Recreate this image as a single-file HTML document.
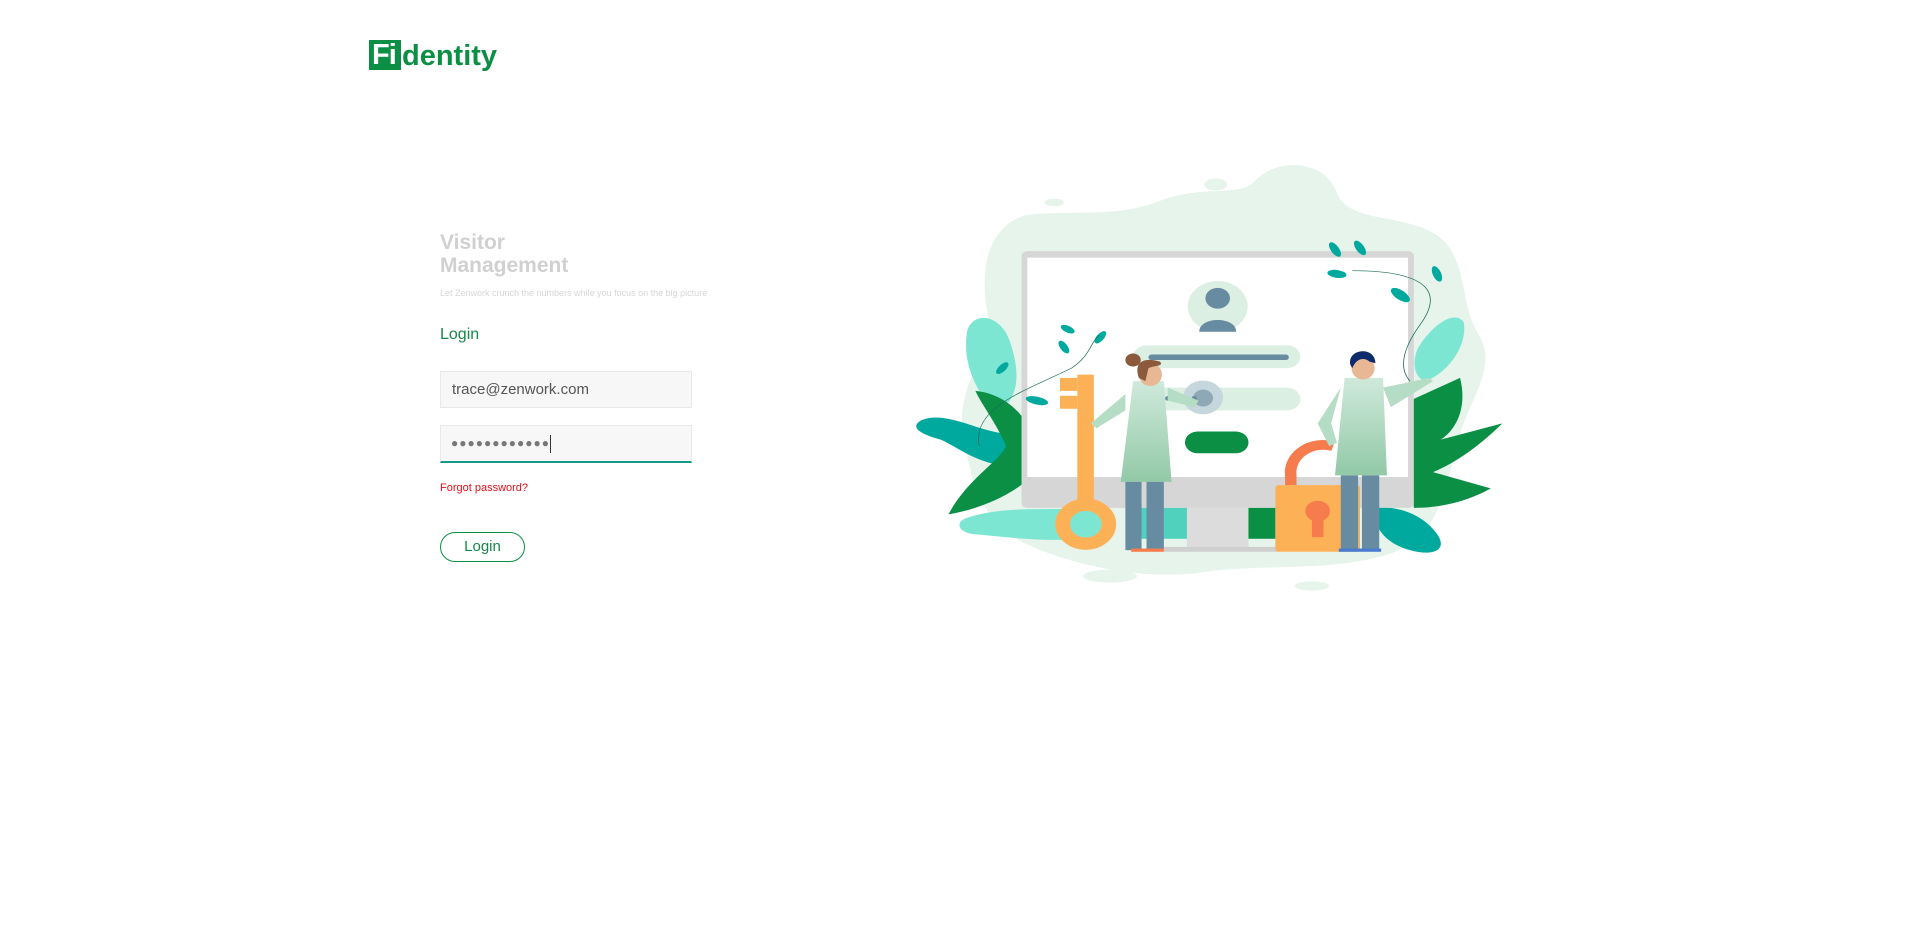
<!DOCTYPE html>
<html><head><meta charset="utf-8"><style>
html,body{margin:0;padding:0;background:#fff;width:1920px;height:925px;overflow:hidden;font-family:"Liberation Sans",sans-serif;}
.abs{position:absolute}
</style></head><body>
<div class="abs" style="left:369px;top:40px;width:32px;height:30px;background:#0b8f45;color:#fff;font-weight:bold;font-size:29px;line-height:31px;letter-spacing:-1px;padding-left:3px;box-sizing:border-box">Fi</div>
<div class="abs" style="left:402px;top:36px;color:#0b8f45;font-weight:bold;font-size:29px;line-height:40px;letter-spacing:0px">dentity</div>
<div class="abs" style="left:440px;top:231px;color:#d0d0d0;font-weight:bold;font-size:21px;line-height:23px">Visitor<br>Management</div>
<div class="abs" style="left:440px;top:287px;color:#d6d6d6;font-size:9px;line-height:12px">Let Zenwork crunch the numbers while you focus on the big picture</div>
<div class="abs" style="left:440px;top:325px;color:#17874a;font-size:16px;line-height:20px">Login</div>
<div class="abs" style="left:440px;top:371px;width:252px;height:37px;background:#f7f7f7;border:1px solid #e8e8e8;box-sizing:border-box;color:#555;font-size:15px;line-height:35px;padding-left:11px">trace@zenwork.com</div>
<div class="abs" style="left:440px;top:425px;width:252px;height:38px;background:#f7f7f7;border:1px solid #e8e8e8;border-bottom:2px solid #17998a;box-sizing:border-box;color:#777;font-size:12px;line-height:34px;padding-left:10px;letter-spacing:1px">●●●●●●●●●●●●<span style="display:inline-block;width:1px;height:18px;background:#333;vertical-align:middle"></span></div>
<div class="abs" style="left:440px;top:481px;color:#e0101a;font-size:11px;line-height:14px">Forgot password?</div>
<div class="abs" style="left:440px;top:532px;width:85px;height:30px;border:1px solid #0b8f45;border-radius:16px;box-sizing:border-box;color:#17874a;font-size:15px;line-height:28px;text-align:center">Login</div>

<svg class="abs" style="left:910px;top:150px" width="600" height="460" viewBox="0 0 1560 1196">
<defs><linearGradient id="g" x1="0" y1="0" x2="0" y2="1"><stop offset="0" stop-color="#cfe9db"/><stop offset="1" stop-color="#92c9a7"/></linearGradient></defs>
<g transform="matrix(1 0 0 0.845 0 9.5)">
<path d="M300 190 C420 170 520 200 640 150 C760 90 860 140 900 80 C960 10 1080 20 1110 120 C1140 220 1300 180 1380 260 C1450 330 1430 470 1480 560 C1530 660 1450 760 1420 900 C1390 1050 1370 1180 1250 1230 C1100 1290 900 1260 750 1290 C600 1310 430 1270 300 1200 C180 1130 160 1000 140 880 C110 720 220 600 200 480 C180 340 210 220 300 190Z" fill="#e6f4ec"/>
<ellipse cx="795" cy="95" rx="30" ry="18" fill="#e6f4ec"/><ellipse cx="375" cy="150" rx="25" ry="12" fill="#e6f4ec"/>
<ellipse cx="520" cy="1300" rx="70" ry="20" fill="#e6f4ec"/><ellipse cx="1045" cy="1330" rx="45" ry="14" fill="#e6f4ec"/>
<path d="M150 540 C170 480 240 500 260 580 C290 680 280 760 230 790 C180 760 130 640 150 540Z" fill="#7de6d3"/>
<path d="M30 820 C90 790 170 850 240 860 C300 870 330 960 260 960 C180 960 120 900 80 880 C20 860 0 840 30 820Z" fill="#00a99d"/>
<path d="M170 730 C260 740 330 830 340 960 C300 1030 200 1090 100 1110 C150 1000 230 950 250 900 C220 820 190 780 170 730Z" fill="#0b8f45"/>
<path d="M150 1120 C250 1080 380 1100 500 1090 L500 1180 C380 1200 250 1180 160 1170 C120 1160 120 1130 150 1120Z" fill="#7de6d3"/>
<path d="M1430 690 C1450 780 1420 850 1380 880 L1540 830 C1480 900 1420 950 1360 980 C1420 1000 1480 1020 1510 1030 C1450 1070 1380 1090 1310 1090 L1300 760Z" fill="#0b8f45"/>
<path d="M1320 600 C1360 520 1420 480 1440 520 C1450 600 1390 680 1340 700 C1310 690 1305 640 1320 600Z" fill="#7de6d3"/>
<path d="M1200 1090 C1280 1080 1340 1120 1370 1170 C1400 1220 1360 1240 1300 1220 C1240 1200 1210 1160 1200 1090Z" fill="#00a99d"/>
<rect x="290" y="300" width="1020" height="790" rx="15" fill="#d6d6d6"/>
<rect x="305" y="320" width="990" height="675" fill="#fff"/>
<rect x="720" y="1090" width="160" height="125" fill="#dcdcdc"/>
<rect x="600" y="1090" width="120" height="95" fill="#4fd1bd"/><rect x="880" y="1090" width="70" height="95" fill="#0b8f45"/>
<rect x="640" y="1210" width="320" height="15" fill="#cfcfcf"/>
<circle cx="800" cy="470" r="78" fill="#dcefe3"/>
<circle cx="800" cy="445" r="32" fill="#678ba0"/>
<path d="M752 548 C752 500 848 500 848 548Z" fill="#678ba0"/>
<rect x="580" y="590" width="435" height="70" rx="35" fill="#dcefe3"/>
<rect x="620" y="618" width="365" height="17" rx="8" fill="#678ba0"/>
<rect x="580" y="720" width="435" height="70" rx="35" fill="#dcefe3"/>
<circle cx="762" cy="750" r="52" fill="#c5d6dc"/><circle cx="762" cy="752" r="26" fill="#8fa8b5"/>
<g fill="#678ba0"><circle cx="670" cy="753" r="7"/><circle cx="693" cy="753" r="7"/><circle cx="716" cy="753" r="7"/><circle cx="739" cy="753" r="7"/></g>
<rect x="715" y="855" width="165" height="67" rx="33" fill="#0b8f45"/>
<g fill="#fdb157"><rect x="435" y="680" width="43" height="390"/><rect x="390" y="690" width="45" height="40"/><rect x="390" y="745" width="45" height="40"/></g>
<circle cx="457" cy="1140" r="60" fill="none" stroke="#fdb157" stroke-width="38"/>
<path d="M560 740 L470 830 L485 845 L560 790Z" fill="#b5dcc5"/>
<path d="M670 720 L750 760 L740 780 L670 760Z" fill="#b5dcc5"/>
<path d="M580 700 L660 700 L680 1010 L548 1010 Z" fill="url(#g)"/>
<rect x="560" y="1010" width="42" height="210" fill="#678ba0"/><rect x="615" y="1010" width="45" height="210" fill="#678ba0"/>
<rect x="575" y="1215" width="85" height="10" fill="#f77c4d"/>
<ellipse cx="625" cy="680" rx="30" ry="35" fill="#e8b894"/>
<path d="M595 690 C580 640 610 625 650 640 C660 655 640 650 620 660 L612 700Z" fill="#8b5a3c"/>
<circle cx="580" cy="635" r="20" fill="#8b5a3c"/>
<path d="M990 1020 L990 990 A85 85 0 0 1 1100 900" fill="none" stroke="#f77c4d" stroke-width="30"/>
<rect x="950" y="1020" width="220" height="205" rx="8" fill="#fdb157"/>
<circle cx="1060" cy="1100" r="32" fill="#f77c4d"/><rect x="1045" y="1110" width="30" height="70" fill="#f77c4d"/>
<path d="M1230 720 L1350 690 L1360 700 L1250 780Z" fill="#b5dcc5"/>
<path d="M1120 720 L1060 830 L1090 900 L1110 890 L1095 830Z" fill="#b5dcc5"/>
<path d="M1130 690 L1230 690 L1240 990 L1105 990 Z" fill="url(#g)"/>
<rect x="1120" y="990" width="45" height="230" fill="#678ba0"/><rect x="1175" y="990" width="45" height="230" fill="#678ba0"/>
<rect x="1115" y="1215" width="110" height="10" fill="#4a7bd0"/>
<ellipse cx="1178" cy="660" rx="30" ry="35" fill="#e8b894"/>
<path d="M1145 650 C1135 600 1210 590 1210 645 L1195 640 C1180 625 1160 630 1150 660Z" fill="#0d2a6b"/>
<g fill="#00a99d">
<ellipse cx="410" cy="540" rx="20" ry="10" transform="rotate(30 410 540)"/><ellipse cx="495" cy="565" rx="22" ry="10" transform="rotate(-55 495 565)"/>
<ellipse cx="400" cy="595" rx="22" ry="10" transform="rotate(60 400 595)"/><ellipse cx="240" cy="660" rx="22" ry="10" transform="rotate(-50 240 660)"/>
<ellipse cx="330" cy="760" rx="30" ry="12" transform="rotate(15 330 760)"/>
<ellipse cx="1105" cy="295" rx="25" ry="11" transform="rotate(60 1105 295)"/><ellipse cx="1170" cy="290" rx="25" ry="11" transform="rotate(60 1170 290)"/>
<ellipse cx="1110" cy="370" rx="25" ry="12" transform="rotate(10 1110 370)"/><ellipse cx="1275" cy="435" rx="30" ry="14" transform="rotate(40 1275 435)"/>
<ellipse cx="1370" cy="370" rx="25" ry="11" transform="rotate(70 1370 370)"/>
</g>
<path d="M180 900 C160 780 300 730 420 660 C470 620 470 580 490 560 M1150 360 C1300 360 1400 400 1330 520 C1280 600 1270 660 1300 700" fill="none" stroke="#1a6b5a" stroke-width="2"/>
</g>
</svg>
</body></html>
